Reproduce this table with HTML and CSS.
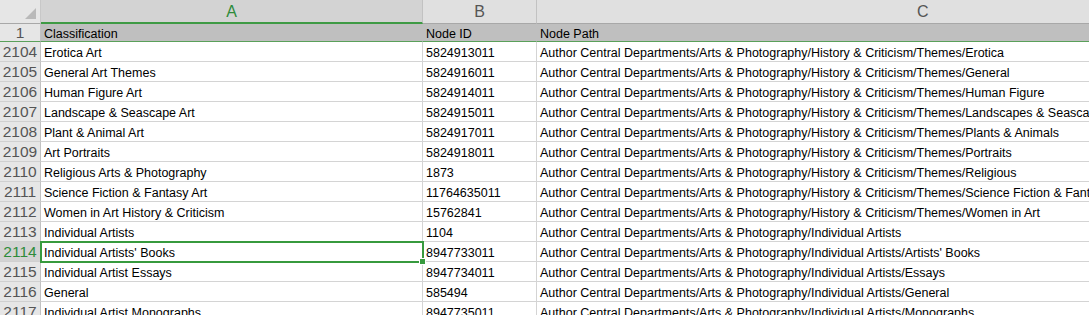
FILE: index.html
```html
<!DOCTYPE html>
<html>
<head>
<meta charset="utf-8">
<link rel="stylesheet" href="styles.css">
</head>
<body>
<div class="sheet">
  <div class="corner"><span class="tri"></span></div>
  <div class="colhead sel">A</div>
  <div class="colhead">B</div>
  <div class="colhead wide">C</div>

  <div class="rowhead first">1</div>
  <div class="cell hdr">Classification</div>
  <div class="cell hdr">Node ID</div>
  <div class="cell hdr">Node Path</div>

  <div class="rowhead">2104</div><div class="cell">Erotica Art</div><div class="cell">5824913011</div><div class="cell">Author Central Departments/Arts &amp; Photography/History &amp; Criticism/Themes/Erotica</div>
  <div class="rowhead">2105</div><div class="cell">General Art Themes</div><div class="cell">5824916011</div><div class="cell">Author Central Departments/Arts &amp; Photography/History &amp; Criticism/Themes/General</div>
  <div class="rowhead">2106</div><div class="cell">Human Figure Art</div><div class="cell">5824914011</div><div class="cell">Author Central Departments/Arts &amp; Photography/History &amp; Criticism/Themes/Human Figure</div>
  <div class="rowhead">2107</div><div class="cell">Landscape &amp; Seascape Art</div><div class="cell">5824915011</div><div class="cell">Author Central Departments/Arts &amp; Photography/History &amp; Criticism/Themes/Landscapes &amp; Seascapes</div>
  <div class="rowhead">2108</div><div class="cell">Plant &amp; Animal Art</div><div class="cell">5824917011</div><div class="cell">Author Central Departments/Arts &amp; Photography/History &amp; Criticism/Themes/Plants &amp; Animals</div>
  <div class="rowhead">2109</div><div class="cell">Art Portraits</div><div class="cell">5824918011</div><div class="cell">Author Central Departments/Arts &amp; Photography/History &amp; Criticism/Themes/Portraits</div>
  <div class="rowhead">2110</div><div class="cell">Religious Arts &amp; Photography</div><div class="cell">1873</div><div class="cell">Author Central Departments/Arts &amp; Photography/History &amp; Criticism/Themes/Religious</div>
  <div class="rowhead">2111</div><div class="cell">Science Fiction &amp; Fantasy Art</div><div class="cell">11764635011</div><div class="cell">Author Central Departments/Arts &amp; Photography/History &amp; Criticism/Themes/Science Fiction &amp; Fantasy</div>
  <div class="rowhead">2112</div><div class="cell">Women in Art History &amp; Criticism</div><div class="cell">15762841</div><div class="cell">Author Central Departments/Arts &amp; Photography/History &amp; Criticism/Themes/Women in Art</div>
  <div class="rowhead">2113</div><div class="cell">Individual Artists</div><div class="cell">1104</div><div class="cell">Author Central Departments/Arts &amp; Photography/Individual Artists</div>
  <div class="rowhead selrow">2114</div><div class="cell active">Individual Artists' Books<span class="handle"></span></div><div class="cell">8947733011</div><div class="cell">Author Central Departments/Arts &amp; Photography/Individual Artists/Artists' Books</div>
  <div class="rowhead">2115</div><div class="cell">Individual Artist Essays</div><div class="cell">8947734011</div><div class="cell">Author Central Departments/Arts &amp; Photography/Individual Artists/Essays</div>
  <div class="rowhead">2116</div><div class="cell">General</div><div class="cell">585494</div><div class="cell">Author Central Departments/Arts &amp; Photography/Individual Artists/General</div>
  <div class="rowhead">2117</div><div class="cell">Individual Artist Monographs</div><div class="cell">8947735011</div><div class="cell">Author Central Departments/Arts &amp; Photography/Individual Artists/Monographs</div>
</div>
</body>
</html>
```

FILE: styles.css
```css
html, body {
  margin: 0;
  padding: 0;
  background: #ffffff;
  overflow: hidden;
  width: 1089px;
  height: 315px;
}

.sheet {
  display: grid;
  grid-template-columns: 41px 382px 114px 1fr;
  grid-template-rows: 24px 18px repeat(14, 20px);
  font-family: "Liberation Sans", Arial, sans-serif;
  font-size: 12.5px;
  color: #000;
  overflow: hidden;
  height: 315px;
}

.corner {
  background: #e6e6e6;
  border-right: 1px solid #c8c8c8;
  border-bottom: 1px solid #a8a8a8;
  box-sizing: border-box;
  position: relative;
}

.tri {
  position: absolute;
  right: 4px;
  bottom: 4px;
  width: 0;
  height: 0;
  border-left: 11px solid transparent;
  border-bottom: 11px solid #b9b9b9;
}

.colhead {
  background: #e0e0e0;
  border-right: 1px solid #c2c2c2;
  border-bottom: 1px solid #a8a8a8;
  box-sizing: border-box;
  display: flex;
  align-items: center;
  justify-content: center;
  font-size: 16px;
  color: #555;
  padding-top: 1px;
}

.colhead.wide {
  justify-content: flex-start;
  padding-left: 380px;
  border-right: none;
}

.colhead.sel {
  background: #d3d3d3;
  color: #2e8b3a;
  border-bottom: 2px solid #3e9a44;
}

.rowhead {
  background: #e6e6e6;
  border-right: 1px solid #c2c2c2;
  border-bottom: 1px solid #d0d0d0;
  box-sizing: border-box;
  display: flex;
  align-items: center;
  justify-content: center;
  font-size: 15.5px;
  color: #555;
  padding-top: 1px;
}

.rowhead.first {
  border-bottom: 1px solid #5aa05a;
}

.rowhead.selrow {
  background: #d3d3d3;
  color: #2e8b3a;
}

.cell {
  border-right: 1px solid #d4d4d4;
  border-bottom: 1px solid #d4d4d4;
  box-sizing: border-box;
  padding: 2px 0 0 3px;
  display: flex;
  align-items: center;
  white-space: nowrap;
  overflow: visible;
  position: relative;
}

.cell.hdr {
  background: #bfbfbf;
  border-right: 1px solid #bfbfbf;
  border-bottom: 1px solid #5aa05a;
}

.cell:nth-child(4n) {
  overflow: hidden;
  border-right: none;
}

.cell.active {
  z-index: 2;
  outline: 2px solid #379a3e;
  outline-offset: -1px;
}

.handle {
  position: absolute;
  right: -4px;
  bottom: -4px;
  width: 5px;
  height: 5px;
  background: #379a3e;
  border: 1px solid #fff;
}
```
